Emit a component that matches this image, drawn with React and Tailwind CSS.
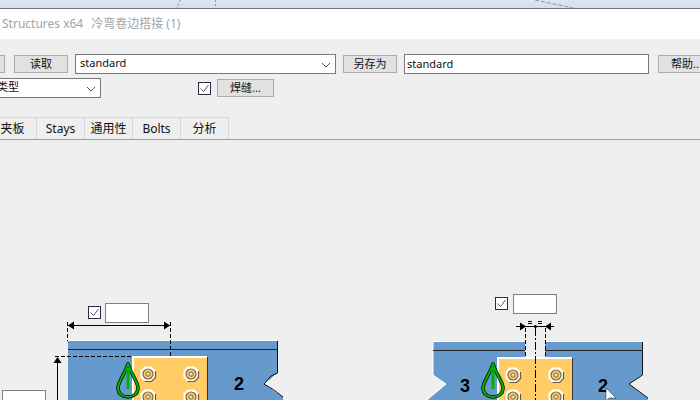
import React from 'react';

const font = '[font-family:"Noto_Sans","Noto_Sans_CJK_SC",sans-serif]';

function Btn({ className, children }) {
  return (
    <div className={`flex items-center justify-center h-[18px] bg-[#e1e1e1] border border-[#adadad] text-[11px] text-[#111] shrink-0 ${className}`}>
      {children}
    </div>
  );
}

function Chevron() {
  return (
    <svg width="10" height="6" viewBox="0 0 10 6" className="absolute right-[4px] top-[7px]">
      <path d="M1 1 L5 5 L9 1" fill="none" stroke="#555" strokeWidth="1" />
    </svg>
  );
}

function Combo({ className, children }) {
  return (
    <div className={`relative flex items-center h-[20px] bg-white border border-[#7a7a7a] text-[11px] text-[#111] shrink-0 pl-[4px] pb-[2px] ${className}`}>
      {children}
      <Chevron />
    </div>
  );
}

function Check({ className }) {
  return (
    <div className={`flex items-center justify-center w-[13px] h-[13px] bg-white border border-[#33273f] shrink-0 ${className}`}>
      <svg width="11" height="11" viewBox="0 0 11 11">
        <path d="M1.5 5.5 L4.5 8.5 L9.5 2" fill="none" stroke="#5a5560" strokeWidth="1" />
      </svg>
    </div>
  );
}

function Bolt({ x, y }) {
  return (
    <g>
      <path d={`M${x - 3.5} ${y - 7.5} h7 l4 4 v7 l-4 4 h-7 l-4 -4 v-7 z`} fill="#fff" />
      <path d={`M${x + 7.5} ${y - 3} v6.5 l-4 4 h-7`} fill="none" stroke="#6b5a3a" strokeWidth="1.2" />
      <circle cx={x} cy={y} r="5" fill="#ffcc66" stroke="#7d6638" strokeWidth="1.2" />
      <circle cx={x} cy={y} r="2.2" fill="#e6dcc0" stroke="#7d6638" strokeWidth="1" />
    </g>
  );
}

function Drop({ x }) {
  const outline = `M${x} 364 C${x - 4} 376 ${x - 10} 382 ${x - 10} 388 C${x - 10} 394 ${x - 5} 397 ${x} 397 C${x + 5} 397 ${x + 10} 394 ${x + 10} 388 C${x + 10} 382 ${x + 4} 376 ${x} 364 Z`;
  return (
    <g fill="none" strokeLinejoin="round">
      <path d={outline} stroke="#000" strokeWidth="3.5" />
      <path d={outline} stroke="#00b000" strokeWidth="2.2" />
      <path d={`M${x} 368 V389`} stroke="#00b000" strokeWidth="3" />
    </g>
  );
}

function ArrowR({ x, y }) {
  return <path d={`M${x} ${y} l-6 -4 v8 z`} fill="#000" />;
}

function ArrowL({ x, y }) {
  return <path d={`M${x} ${y} l6 -4 v8 z`} fill="#000" />;
}

// left joint, drawn in page coordinates
function LeftJoint() {
  return (
    <svg width="300" height="110" viewBox="0 290 300 110" className="block" shapeRendering="crispEdges">
      <path d="M68 341 H277.5 V373 L264 384 L283 397 V400 H68 Z" fill="#6699cc" />
      <path d="M68 340.5 H277" stroke="#fff" fill="none" />
      <path d="M277.5 341 V373 L271 376 L264 384 L274 390 L283 397" stroke="#111" fill="none" shapeRendering="auto" />
      <path d="M68 349.5 H277" stroke="#222" fill="none" />
      <rect x="133" y="356" width="74" height="44" fill="#ffcc66" />
      <path d="M133 400 V357 H207" stroke="#fff" strokeWidth="2" fill="none" />
      <path d="M207.5 357 V400" stroke="#333" fill="none" />
      <path d="M67.5 322 V341 M170.5 322 V356 M55 356.5 H132" stroke="#000" strokeDasharray="4 2" fill="none" />
      <path d="M68 325.5 H170 M57.5 360 V400" stroke="#000" fill="none" />
      <g shapeRendering="auto">
        <ArrowL x={68} y={325.5} />
        <ArrowR x={170} y={325.5} />
        <path d="M57.5 357 l-4 6 h8 z" fill="#000" />
        <Bolt x={148} y={374} />
        <Bolt x={191} y={374} />
        <Bolt x={148} y={397} />
        <Bolt x={191} y={397} />
        <Drop x={128} />
        <text x="239" y="390" textAnchor="middle" fontSize="18" fontWeight="700" fontFamily="Liberation Sans, sans-serif">2</text>
      </g>
    </svg>
  );
}

// right joint, also in page coordinates
function RightJoint() {
  return (
    <svg width="240" height="115" viewBox="420 285 240 115" className="block" shapeRendering="crispEdges">
      <path d="M433 341 H642.5 V375 L629 384 L648 398 V400 H427 L446 384 L433 375 Z" fill="#6699cc" />
      <rect x="525" y="341" width="20" height="17" fill="#efefef" />
      <path d="M433 341 V375 L446 384 L427 400" stroke="#fff" fill="none" shapeRendering="auto" />
      <path d="M642.5 341 V375 L629 384 L648 398" stroke="#111" fill="none" shapeRendering="auto" />
      <path d="M433 341 H525 M545 341 H643" stroke="#fff" fill="none" />
      <path d="M433 350.5 H525 M545 350.5 H643" stroke="#222" fill="none" />
      <rect x="498" y="357" width="74" height="43" fill="#ffcc66" />
      <path d="M498 400 V358 H572" stroke="#fff" strokeWidth="2" fill="none" />
      <path d="M572.5 358 V400" stroke="#333" fill="none" />
      <path d="M525.5 328 V357 M545.5 328 V357" stroke="#000" strokeDasharray="4 2" fill="none" />
      <path d="M535.5 328 V400" stroke="#000" strokeDasharray="8 2 2 2" fill="none" />
      <path d="M516 326.5 H554" stroke="#000" fill="none" />
      <path d="M528 323.5 h4 M528 321.5 h4 M538 323.5 h4 M538 321.5 h4" stroke="#000" fill="none" />
      <g shapeRendering="auto">
        <ArrowR x={526} y={326.5} />
        <ArrowL x={545} y={326.5} />
        <circle cx="535.5" cy="326.5" r="1.5" fill="#000" />
        <Bolt x={513} y={375} />
        <Bolt x={556} y={375} />
        <Bolt x={513} y={397} />
        <Bolt x={556} y={397} />
        <Drop x={493} />
        <text x="465" y="392" textAnchor="middle" fontSize="18" fontWeight="700" fontFamily="Liberation Sans, sans-serif">3</text>
        <text x="603" y="392" textAnchor="middle" fontSize="18" fontWeight="700" fontFamily="Liberation Sans, sans-serif">2</text>
        <path d="M606 388 V401 L609 398 H616 Z" fill="#fff" stroke="#222" strokeWidth="0.5" />
      </g>
    </svg>
  );
}

const tabs = ['夹板', 'Stays', '通用性', 'Bolts', '分析'];

export default function App() {
  return (
    <div className={`relative w-[700px] h-[400px] overflow-hidden bg-[#efefef] ${font}`}>
      {/* desktop behind the window */}
      <div className="h-[9px] bg-gradient-to-b from-[#dfe6f2] to-[#d5dcea] border-b border-[#70757c] relative">
        <svg width="700" height="9" viewBox="0 0 700 9" className="absolute left-0 top-0">
          <path d="M180 0 L177 8" stroke="#8c93a0" strokeDasharray="2 2" fill="none" />
          <path d="M215.5 0 V8" stroke="#8c93a0" strokeDasharray="2 2" fill="none" />
          <path d="M535 0 L573 8" stroke="#8c93a0" strokeDasharray="4 2" fill="none" />
        </svg>
      </div>

      {/* title bar */}
      <div className="flex items-center h-[30px] bg-white pl-[2px] text-[12px] text-[#a3a3a3] whitespace-nowrap">
        <span>Structures x64</span>
        <span className="ml-[8px]">冷弯卷边搭接 (1)</span>
      </div>

      {/* preset row */}
      <div className="flex items-center h-[20px] mt-[15px] -ml-[40px] w-[800px]">
        <Btn className="w-[45px]" />
        <Btn className="w-[54px] ml-[9px]">读取</Btn>
        <Combo className="w-[261px] ml-[7px]">standard</Combo>
        <Btn className="w-[54px] ml-[7px]">另存为</Btn>
        <div className="flex items-center h-[20px] w-[245px] ml-[7px] pl-[2px] bg-white border border-[#7a7a7a] text-[11px] text-[#111] shrink-0">standard</div>
        <Btn className="w-[60px] ml-[9px] justify-start pl-[12px]">帮助...</Btn>
      </div>

      {/* type row */}
      <div className="flex items-center h-[20px] mt-[4px] -ml-[40px]">
        <Combo className="w-[141px] pl-[36px]">类型</Combo>
        <Check className="ml-[97px]" />
        <Btn className="w-[57px] ml-[6px]">焊缝...</Btn>
      </div>

      {/* tabs, the first one runs off the left edge */}
      <div className="flex h-[23px] mt-[19px] border-b border-[#a0a0a0] -ml-[11px]">
        {tabs.map((label) => (
          <div key={label} className="flex items-center justify-center w-[48px] h-[22px] border-r border-t border-[#d9d9d9] text-[12px] text-[#111]">
            {label}
          </div>
        ))}
      </div>

      {/* joint drawings */}
      <div className="relative flex items-end h-[260px]">
        <LeftJoint />
        <div className="ml-[120px]">
          <RightJoint />
        </div>
        <Check className="absolute left-[88px] top-[166px]" />
        <div className="absolute left-[105px] top-[163px] w-[44px] h-[20px] bg-white border border-[#808080]" />
        <div className="absolute left-[2px] top-[250px] w-[44px] h-[20px] bg-white border border-[#808080]" />
        <Check className="absolute left-[495px] top-[157px]" />
        <div className="absolute left-[513px] top-[154px] w-[44px] h-[20px] bg-white border border-[#808080]" />
      </div>
    </div>
  );
}
